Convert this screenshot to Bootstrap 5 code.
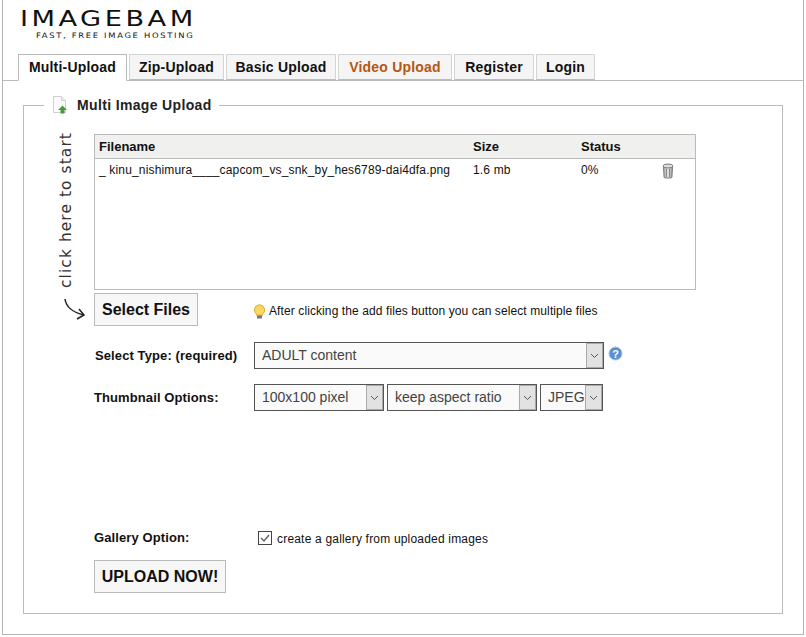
<!DOCTYPE html>
<html lang="en">
<head>
<meta charset="utf-8">
<title>ImageBam</title>
<link href="https://cdn.jsdelivr.net/npm/bootstrap@5.3.0/dist/css/bootstrap.min.css" rel="stylesheet">
<style>
html,body{height:100%;}
body{background:#fff;color:#111;font-family:"Liberation Sans",Arial,sans-serif;font-size:12px;overflow:hidden;}
.ib-page{margin-left:2px;margin-right:2px;height:635px;border:1px solid #b4b4b4;border-top:0;}
.ib-logo{height:54px;padding:10px 0 0 17px;line-height:1;}
.ib-name{width:max-content;font-family:"DejaVu Sans",sans-serif;font-size:20.5px;letter-spacing:2.6px;color:#111;height:18px;line-height:18px;transform:scaleX(1.33);transform-origin:left center;white-space:nowrap;}
.ib-tag{width:max-content;font-family:"DejaVu Sans",sans-serif;font-size:7.5px;letter-spacing:1.5px;color:#111;margin:4px 0 0 16px;white-space:nowrap;transform:scaleX(1.12);transform-origin:left center;}
.ib-tabs{padding-left:15px;border-bottom:1px solid #bbb;gap:2px;height:27px;--bs-nav-tabs-border-width:0;}
.ib-tabs .nav-link{height:26px;padding:3px 0;text-align:center;font-size:14px;letter-spacing:.2px;line-height:18px;font-weight:700;color:#111;background:#f5f5f5;border:1px solid #d4d4d4;border-bottom:1px solid #bbb;border-radius:0;margin:0;}
.ib-tabs .nav-link.active{height:27px;color:#111;background:#fff;border:1px solid #bbb;border-bottom-color:#fff;}
.ib-tabs .nav-link.ib-video{color:#b8560f;}
.ib-t1{width:109px;}.ib-t2{width:95px;}.ib-t3{width:110px;}.ib-t4{width:114px;}.ib-t5{width:80px;}.ib-t6{width:59px;}
.ib-set{margin:14px 20px 0 20px;height:519px;border:1px solid #bbb;padding:0;min-width:0;}
.ib-set legend{float:none;width:auto;margin:0 0 0 20px;padding:0 7px 0 8px;font-size:14px;letter-spacing:.35px;font-weight:700;line-height:20px;color:#222;display:flex;align-items:center;gap:9px;height:20px;}
.ib-inner{margin-top:19px;}
.ib-hand{width:70px;flex:none;height:198px;}
.ib-hand-text{font-family:"DejaVu Sans",sans-serif;font-size:15.4px;letter-spacing:1.1px;color:#333;writing-mode:vertical-rl;transform:rotate(180deg);height:154px;margin-left:33px;white-space:nowrap;line-height:18px;}
.ib-arrow{display:block;margin:10px 0 0 39px;}
.ib-table{width:602px;height:156px;border:1px solid #bbb;}
.ib-table .table{margin:0;font-size:12px;--bs-table-bg:transparent;}
.ib-table th{background:#f0f0ee;font-size:13px;padding:3px 4px;height:23px;line-height:16px;border-bottom:1px solid #bbb;font-weight:700;color:#111;}
.ib-table td{border:0;padding:4px;line-height:15px;color:#111;letter-spacing:.16px;}
.ib-trash{display:block;margin:0 0 0 1px;}
.ib-btn{background:#f7f7f7;border:1px solid #bbb;border-radius:0;font-weight:700;color:#111;padding:0;}
.ib-btn:hover{background:#f7f7f7;color:#111;border-color:#bbb;}
.ib-files{margin-top:3px;}
.ib-select-btn{width:104px;height:33px;font-size:16px;}
.ib-hint{margin:3px 0 0 54px;font-size:12px;letter-spacing:.1px;color:#111;gap:2px;}
.ib-row-label{width:160px;font-size:13px;letter-spacing:.1px;font-weight:700;color:#111;flex:none;}
.ib-type-label{padding-left:1px;}
.ib-sel{height:27px;border:1px solid #555;border-radius:0;font-family:"Liberation Sans",sans-serif;font-size:14px;color:#444;padding:0 17px 0 7px;line-height:25px;background-color:#fafafa;background-image:url("data:image/svg+xml,%3Csvg xmlns='http://www.w3.org/2000/svg' width='17' height='25'%3E%3Crect x='.5' y='.5' width='16' height='24' fill='%23e2e2e2' stroke='%23aaa'/%3E%3Cpath d='M5 11l3.5 3.5L12 11' fill='none' stroke='%23555'/%3E%3C/svg%3E");background-position:right 0 center;background-size:17px 25px;background-repeat:no-repeat;box-shadow:none;}
.ib-w1{width:350px;}
.ib-w2{width:130px;}
.ib-w3{width:150px;}
.ib-w4{width:63px;}
.ib-help{margin:-4px 0 0 4px;}
.ib-thumbs{margin-top:15px;}
.ib-selects{gap:3px;}
.ib-check.form-check-input{width:14px;height:14px;border:1px solid #444;border-radius:0;margin:0;flex:none;background-color:#fff;background-image:url("data:image/svg+xml,%3Csvg xmlns='http://www.w3.org/2000/svg' viewBox='0 0 12 12'%3E%3Cpath d='M2 6l3 3 5-6' fill='none' stroke='%23666' stroke-width='1.500'/%3E%3C/svg%3E");background-size:12px 12px;box-shadow:none;}
.ib-gallery{margin-top:117px;}
.ib-gallery-text{letter-spacing:.19px;margin:2px 0 0 5px;}
.ib-upload{width:132px;height:33px;font-size:16px;margin-top:12px;}
</style>
</head>
<body>
<div class="ib-page">
  <div class="ib-logo">
    <div class="ib-name">IMAGEBAM</div>
    <div class="ib-tag">FAST, FREE IMAGE HOSTING</div>
  </div>
  <ul class="nav nav-tabs ib-tabs">
    <li class="nav-item"><a class="nav-link active ib-t1" href="#">Multi-Upload</a></li>
    <li class="nav-item"><a class="nav-link ib-t2" href="#">Zip-Upload</a></li>
    <li class="nav-item"><a class="nav-link ib-t3" href="#">Basic Upload</a></li>
    <li class="nav-item"><a class="nav-link ib-video ib-t4" href="#">Video Upload</a></li>
    <li class="nav-item"><a class="nav-link ib-t5" href="#">Register</a></li>
    <li class="nav-item"><a class="nav-link ib-t6" href="#">Login</a></li>
  </ul>
  <fieldset class="ib-set">
    <legend>
      <svg width="16" height="18" viewBox="0 0 16 18"><path d="M1.500 .5h8l4 4v12h-12z" fill="#fbfbfb" stroke="#d0d0d0"/><path d="M9.500 .5v4h4" fill="#eee" stroke="#d0d0d0"/><path d="M10.500 9.500l4.500 4.500h-2.500v3.500h-4V14H6z" fill="#4c9a3c"/></svg>
      Multi Image Upload
    </legend>
    <div class="d-flex ib-inner">
      <div class="ib-hand">
        <div class="ib-hand-text">click here to start</div>
        <svg class="ib-arrow" width="24" height="24" viewBox="0 0 24 24"><path d="M2 1c1 7 6 13 19 16" fill="none" stroke="#222" stroke-width="1.500"/><path d="M14 21l7-4-5-6" fill="none" stroke="#222" stroke-width="1.500"/></svg>
      </div>
      <div class="flex-grow-1">
        <div class="ib-table">
          <table class="table table-borderless">
            <thead>
              <tr><th style="width:374px">Filename</th><th style="width:108px">Size</th><th style="width:80px">Status</th><th></th></tr>
            </thead>
            <tbody>
              <tr>
                <td>_ kinu_nishimura____capcom_vs_snk_by_hes6789-dai4dfa.png</td>
                <td>1.6 mb</td>
                <td>0%</td>
                <td><svg class="ib-trash" width="12" height="16" viewBox="0 0 12 16"><defs><linearGradient id="tg" x1="0" x2="1" y1="0" y2="0"><stop offset="0" stop-color="#aaa"/><stop offset=".5" stop-color="#e6e6e6"/><stop offset="1" stop-color="#999"/></linearGradient></defs><path d="M1.500 3.500h9l-.6 11c-.5.700-7.300.700-7.800 0z" fill="url(#tg)" stroke="#777"/><ellipse cx="6" cy="3" rx="5" ry="2" fill="#ddd" stroke="#777"/><path d="M4.500 6v8M7.500 6v8" stroke="#888"/></svg></td>
              </tr>
            </tbody>
          </table>
        </div>
        <div class="d-flex align-items-center ib-files">
          <button type="button" class="btn ib-btn ib-select-btn">Select Files</button>
          <div class="d-flex align-items-center ib-hint">
            <svg width="15" height="15" viewBox="0 0 15 15"><path d="M7.500 .8a5.200 5.200 0 0 0-3 9.400v1h6v-1a5.200 5.200 0 0 0-3-9.400z" fill="#fbd75b" stroke="#d8a93a"/><rect x="5" y="11.500" width="5" height="3" fill="#777"/></svg>
            <span>After clicking the add files button you can select multiple files</span>
          </div>
        </div>
        <div class="d-flex align-items-center mt-3">
          <div class="ib-row-label ib-type-label">Select Type: (required)</div>
          <select class="form-select ib-sel ib-w1"><option>ADULT content</option></select>
          <svg class="ib-help" width="15" height="15" viewBox="0 0 15 15"><circle cx="7.500" cy="7.500" r="6.500" fill="#5b8fd0" stroke="#a5c3e4"/><text x="7.500" y="11.500" font-family="Liberation Sans" font-size="11" font-weight="700" fill="#fff" text-anchor="middle">?</text></svg>
        </div>
        <div class="d-flex align-items-center ib-thumbs">
          <div class="ib-row-label">Thumbnail Options:</div>
          <div class="d-flex ib-selects">
            <select class="form-select ib-sel ib-w2"><option>100x100 pixel</option></select>
            <select class="form-select ib-sel ib-w3"><option>keep aspect ratio</option></select>
            <select class="form-select ib-sel ib-w4"><option>JPEG</option></select>
          </div>
        </div>
        <div class="d-flex align-items-center ib-gallery">
          <div class="ib-row-label">Gallery Option:</div>
          <div class="d-flex align-items-center ms-1">
            <input class="form-check-input ib-check" type="checkbox" checked>
            <span class="ib-gallery-text">create a gallery from uploaded images</span>
          </div>
        </div>
        <button type="button" class="btn ib-btn ib-upload d-block">UPLOAD NOW!</button>
      </div>
    </div>
  </fieldset>
</div>
</body>
</html>
